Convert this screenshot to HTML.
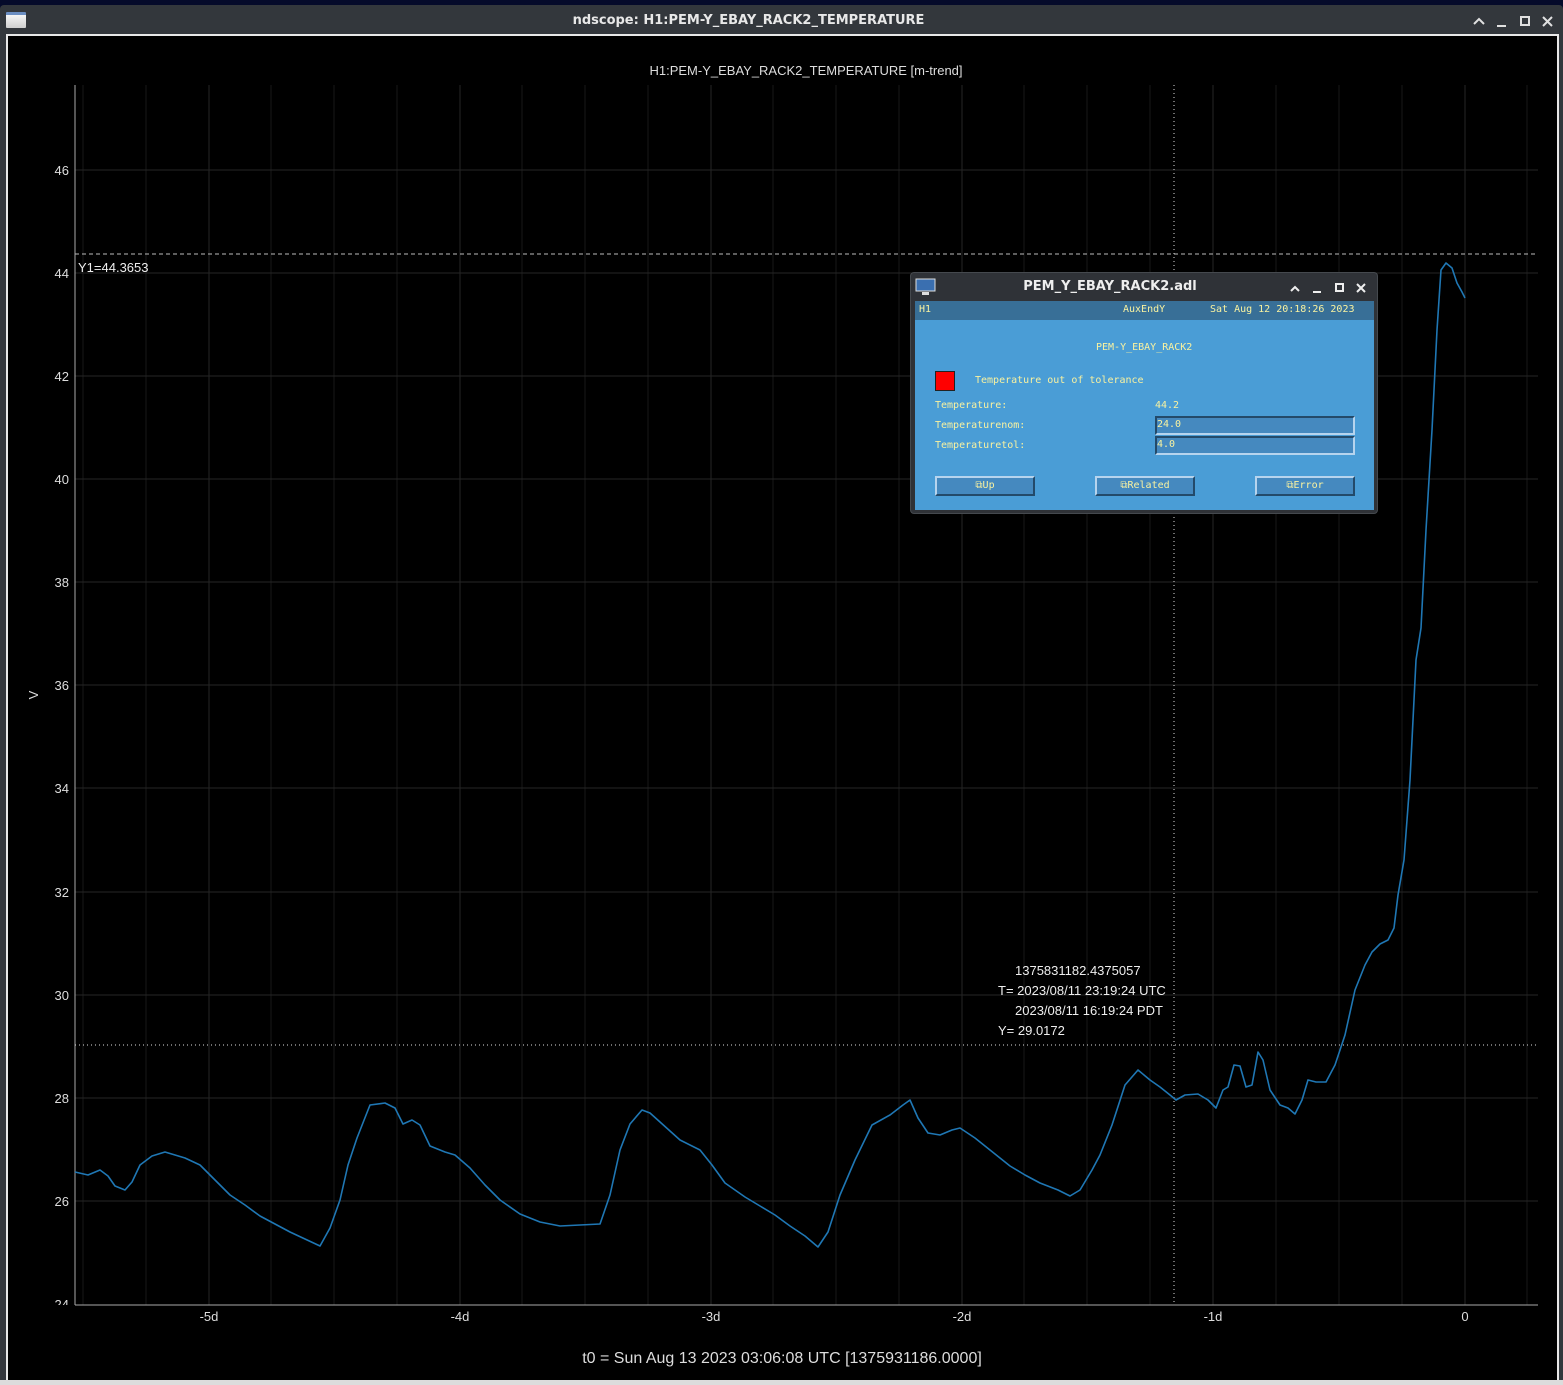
<!DOCTYPE html>
<html><head><meta charset="utf-8"><style>
*{margin:0;padding:0;box-sizing:border-box}
body{width:1563px;height:1385px;background:#050a2a;overflow:hidden;font-family:"Liberation Sans","DejaVu Sans",sans-serif;position:relative}
.win{position:absolute;left:0;top:5px;width:1563px;height:1380px;background:#33373c;border-radius:4px 4px 0 0}
.title{position:absolute;left:0;top:1px;width:100%;height:30px;text-align:center;color:#e8e8e8;font:bold 13px "DejaVu Sans",sans-serif;line-height:30px;padding-right:66px}
.frame{position:absolute;left:6px;top:29px;width:1553px;height:1351px;background:#000;border:2px solid #e8e8e8;border-bottom:none}
.mono{font-family:"DejaVu Sans Mono","Liberation Mono",monospace}
.pop{position:absolute;left:910px;top:272px;width:468px;height:242px;background:#2f3237;border-radius:4px;border:1px solid #45494e}
.pt{position:absolute;left:0;top:0;width:100%;height:27px;color:#eee;font:bold 13px "DejaVu Sans",sans-serif;line-height:28px;text-align:center;padding-right:68px}
.pb{position:absolute;left:4px;top:28px;width:459px;height:209px;background:#4a9dd6}
.ph{position:absolute;left:0;top:0;width:100%;height:19px;background:#386f97}
.y{color:#f9f2a0;font-size:10px;position:absolute;white-space:pre}
.fld{position:absolute;width:200px;height:19px;background:#4589bf;border-top:2px solid #234a6a;border-left:2px solid #234a6a;border-bottom:2px solid #b6d4ee;border-right:2px solid #b6d4ee}
.btn{position:absolute;width:100px;height:20px;background:#4589bf;border-top:2px solid #b6d4ee;border-left:2px solid #b6d4ee;border-bottom:2px solid #234a6a;border-right:2px solid #234a6a;text-align:center;line-height:16px}
</style></head><body>
<div class="win">
<div style="position:absolute;left:6px;top:7px;width:20px;height:16px;background:linear-gradient(#f5f5f5,#d0d0d0);border-top:3px solid #6b8ec2;border-radius:1px"></div>
<div class="title">ndscope: H1:PEM-Y_EBAY_RACK2_TEMPERATURE</div>
<svg style="position:absolute;left:1470px;top:8px" width="90" height="16" fill="none" stroke="#e0e0e0" stroke-width="2">
<path d="M4 11 L9 6 L14 11"/><path d="M27 13 H36"/><rect x="51" y="4" width="8" height="8"/><path d="M73 4 L82 13 M82 4 L73 13"/></svg>
<div class="frame"></div>
</div>
<svg style="position:absolute;left:0;top:0" width="1563" height="1385" font-family="Liberation Sans, DejaVu Sans, sans-serif">
<g stroke="#181818" stroke-width="1">
<line x1="83" y1="85" x2="83" y2="1305"/><line x1="146" y1="85" x2="146" y2="1305"/><line x1="271" y1="85" x2="271" y2="1305"/><line x1="334" y1="85" x2="334" y2="1305"/><line x1="397" y1="85" x2="397" y2="1305"/><line x1="522" y1="85" x2="522" y2="1305"/><line x1="585" y1="85" x2="585" y2="1305"/><line x1="648" y1="85" x2="648" y2="1305"/><line x1="773" y1="85" x2="773" y2="1305"/><line x1="836" y1="85" x2="836" y2="1305"/><line x1="899" y1="85" x2="899" y2="1305"/><line x1="1024" y1="85" x2="1024" y2="1305"/><line x1="1087" y1="85" x2="1087" y2="1305"/><line x1="1150" y1="85" x2="1150" y2="1305"/><line x1="1276" y1="85" x2="1276" y2="1305"/><line x1="1339" y1="85" x2="1339" y2="1305"/><line x1="1402" y1="85" x2="1402" y2="1305"/><line x1="1527" y1="85" x2="1527" y2="1305"/>
</g>
<g stroke="#262626" stroke-width="1">
<line x1="209" y1="85" x2="209" y2="1305"/><line x1="460" y1="85" x2="460" y2="1305"/><line x1="711" y1="85" x2="711" y2="1305"/><line x1="962" y1="85" x2="962" y2="1305"/><line x1="1213" y1="85" x2="1213" y2="1305"/><line x1="1465" y1="85" x2="1465" y2="1305"/>
<line x1="75" y1="170" x2="1538" y2="170"/><line x1="75" y1="273" x2="1538" y2="273"/><line x1="75" y1="376" x2="1538" y2="376"/><line x1="75" y1="479" x2="1538" y2="479"/><line x1="75" y1="582" x2="1538" y2="582"/><line x1="75" y1="685" x2="1538" y2="685"/><line x1="75" y1="788" x2="1538" y2="788"/><line x1="75" y1="892" x2="1538" y2="892"/><line x1="75" y1="995" x2="1538" y2="995"/><line x1="75" y1="1098" x2="1538" y2="1098"/><line x1="75" y1="1201" x2="1538" y2="1201"/>
</g>
<line x1="75" y1="85" x2="75" y2="1305" stroke="#aaa"/>
<line x1="75" y1="1305" x2="1538" y2="1305" stroke="#aaa"/>
<g fill="#ddd" font-size="13" text-anchor="end">
<text x="69" y="175">46</text><text x="69" y="278">44</text><text x="69" y="381">42</text><text x="69" y="484">40</text><text x="69" y="587">38</text><text x="69" y="690">36</text><text x="69" y="793">34</text><text x="69" y="897">32</text><text x="69" y="1000">30</text><text x="69" y="1103">28</text><text x="69" y="1206">26</text><text x="69" y="1309">24</text>
</g>
<rect x="40" y="1305" width="34" height="10" fill="#000"/>
<g fill="#ddd" font-size="13" text-anchor="middle">
<text x="209" y="1321">-5d</text><text x="460" y="1321">-4d</text><text x="711" y="1321">-3d</text><text x="962" y="1321">-2d</text><text x="1213" y="1321">-1d</text><text x="1465" y="1321">0</text>
<text x="806" y="75">H1:PEM-Y_EBAY_RACK2_TEMPERATURE [m-trend]</text>
<text x="782" y="1363" font-size="16">t0 = Sun Aug 13 2023 03:06:08 UTC [1375931186.0000]</text>
<text x="38" y="695" transform="rotate(-90 38 695)">V</text>
</g>
<line x1="75" y1="254" x2="1538" y2="254" stroke="#bbb" stroke-dasharray="4,3"/>
<text x="78" y="272" fill="#eee" font-size="13">Y1=44.3653</text>
<line x1="1174" y1="85" x2="1174" y2="1305" stroke="#ddd" stroke-dasharray="1,3"/>
<line x1="75" y1="1045" x2="1538" y2="1045" stroke="#ddd" stroke-dasharray="1,3"/>
<g fill="#eee" font-size="13">
<text x="1015" y="975">1375831182.4375057</text><text x="998" y="995">T= 2023/08/11 23:19:24 UTC</text><text x="1015" y="1015">2023/08/11 16:19:24 PDT</text><text x="998" y="1035">Y= 29.0172</text>
</g>
<polyline fill="none" stroke="#1f77b4" stroke-width="1.6" stroke-linejoin="round" points="75,1172 88,1175 100,1170 108,1176 115,1186 125,1190 132,1182 140,1165 152,1156 165,1152 185,1158 200,1165 215,1180 230,1195 245,1205 260,1216 290,1232 320,1246 330,1228 340,1200 348,1165 357,1138 370,1105 385,1103 395,1108 403,1124 412,1120 420,1125 430,1146 445,1152 455,1155 470,1168 485,1185 500,1200 520,1214 540,1222 560,1226 580,1225 600,1224 610,1195 620,1150 630,1124 642,1110 650,1113 660,1122 680,1140 700,1150 712,1165 725,1183 745,1197 760,1206 775,1215 790,1226 805,1236 818,1247 828,1232 840,1195 855,1160 872,1125 890,1115 903,1105 910,1100 918,1118 928,1133 940,1135 952,1130 960,1128 975,1138 990,1150 1010,1166 1025,1175 1040,1183 1058,1190 1070,1196 1080,1190 1092,1170 1100,1155 1112,1125 1125,1085 1138,1070 1150,1080 1160,1087 1170,1095 1176,1100 1185,1095 1198,1094 1208,1100 1216,1108 1223,1090 1228,1087 1234,1065 1240,1066 1246,1087 1252,1085 1258,1052 1263,1060 1270,1090 1280,1105 1288,1108 1295,1114 1302,1100 1308,1080 1316,1082 1326,1082 1335,1065 1345,1035 1355,990 1365,965 1372,952 1380,944 1388,940 1394,928 1398,895 1404,860 1410,780 1416,660 1421,628 1426,530 1432,430 1437,330 1441,270 1446,263 1452,268 1457,283 1462,292 1465,298"/>
</svg>
<div style="position:absolute;left:0;top:1380px;width:1563px;height:5px;background:#dcdcdc"></div>
<div class="pop">
<svg style="position:absolute;left:4px;top:5px" width="22" height="18"><rect x="1" y="1" width="19" height="12" fill="#3a6fb0" stroke="#ddd"/><rect x="7" y="14" width="7" height="3" fill="#ddd"/></svg>
<div class="pt">PEM_Y_EBAY_RACK2.adl</div>
<svg style="position:absolute;left:376px;top:8px" width="88" height="14" fill="none" stroke="#eee" stroke-width="2"><path d="M4 10 L8 6 L12 10"/><path d="M26 11 H34"/><rect x="49" y="3" width="7" height="7"/><path d="M70 3 L78 11 M78 3 L70 11"/></svg>
<div class="pb mono">
<div class="ph"></div>
<div class="y" style="left:4px;top:3px">H1</div>
<div class="y" style="left:208px;top:3px">AuxEndY</div>
<div class="y" style="left:295px;top:3px">Sat Aug 12 20:18:26 2023</div>
<div class="y" style="left:181px;top:41px">PEM-Y_EBAY_RACK2</div>
<div style="position:absolute;left:20px;top:70px;width:20px;height:20px;background:#f00;border:1px solid #222"></div>
<div class="y" style="left:60px;top:74px">Temperature out of tolerance</div>
<div class="y" style="left:20px;top:99px">Temperature:</div>
<div class="y" style="left:240px;top:99px">44.2</div>
<div class="y" style="left:20px;top:119px">Temperaturenom:</div>
<div class="y" style="left:20px;top:139px">Temperaturetol:</div>
<div class="fld" style="left:240px;top:115px"><span class="y" style="left:0;top:1px">24.0</span></div>
<div class="fld" style="left:240px;top:135px"><span class="y" style="left:0;top:1px">4.0</span></div>
<div class="btn y" style="left:20px;top:175px;position:absolute">⧉Up</div>
<div class="btn y" style="left:180px;top:175px;position:absolute">⧉Related</div>
<div class="btn y" style="left:340px;top:175px;position:absolute">⧉Error</div>
</div></div>
</body></html>
